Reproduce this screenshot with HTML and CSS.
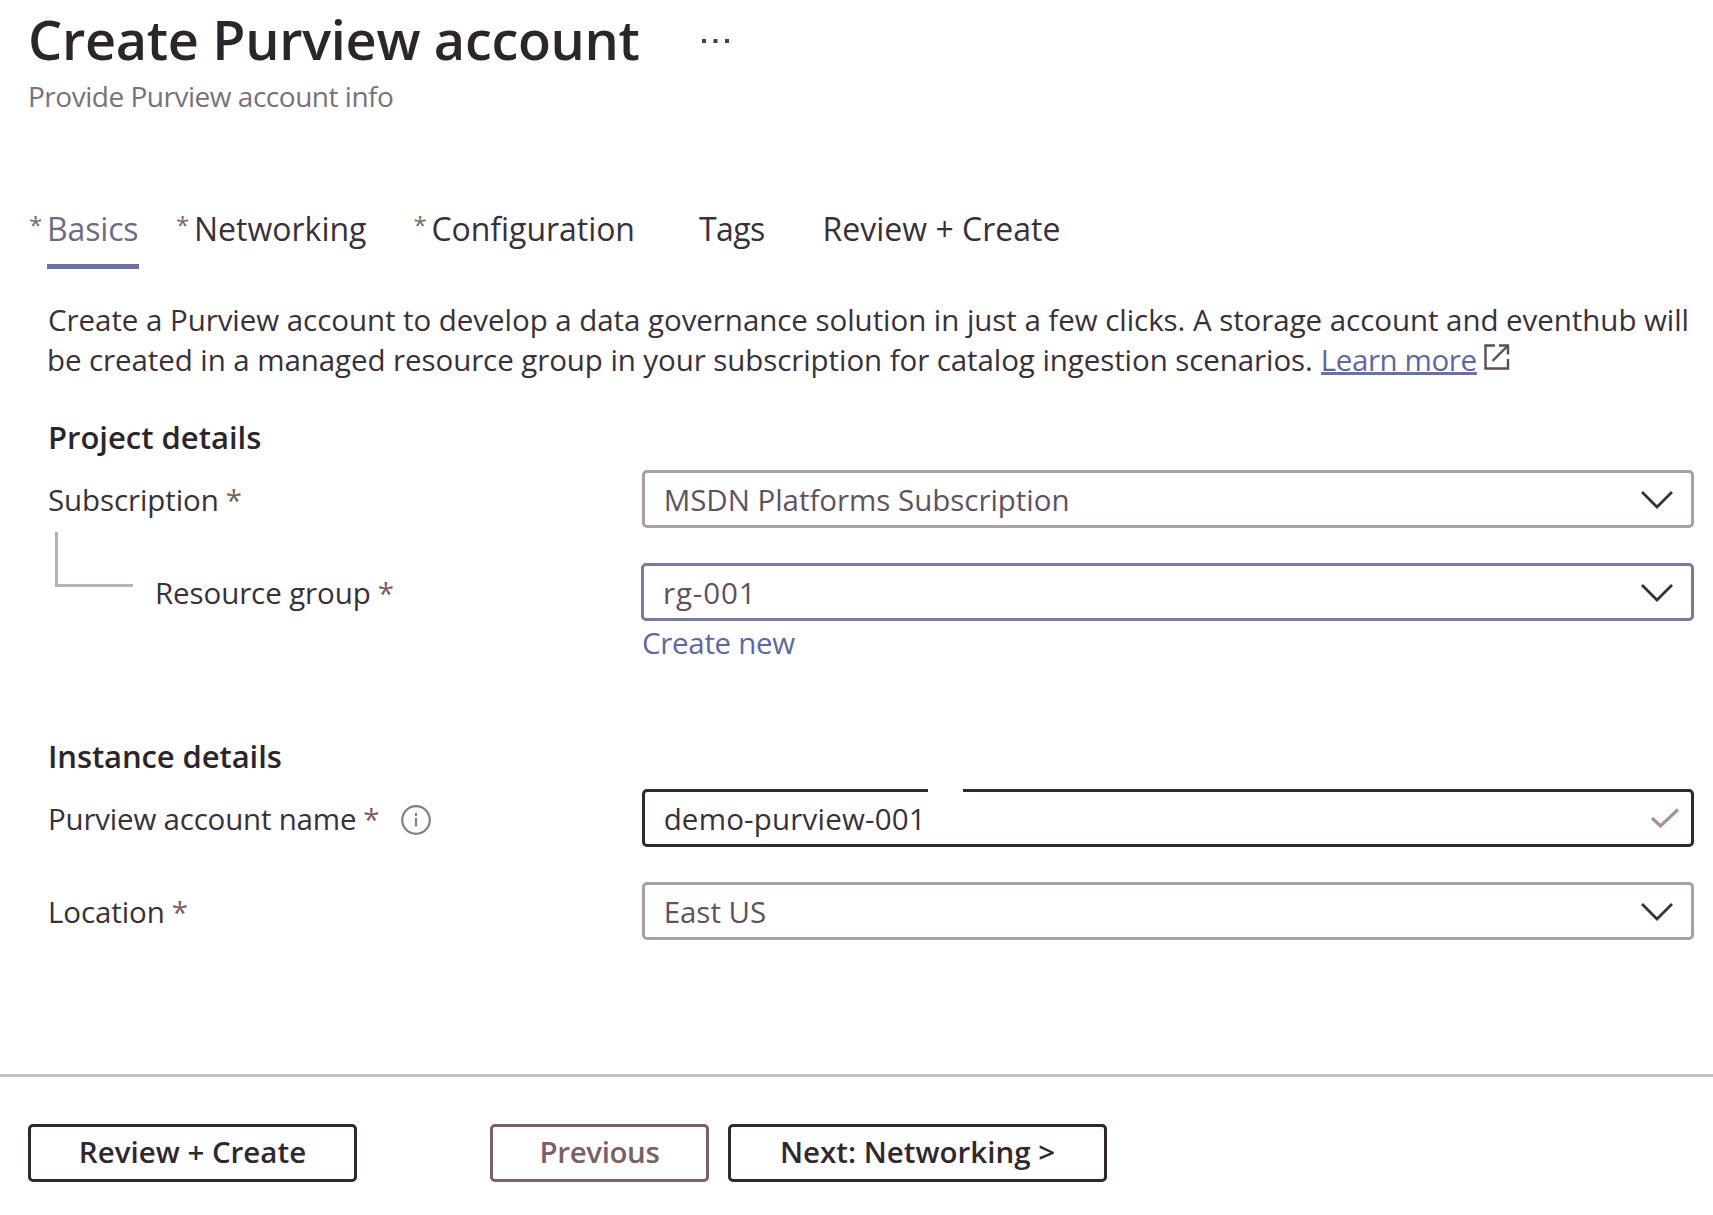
FILE: index.html
```html
<!DOCTYPE html>
<html lang="en">
<head>
<meta charset="utf-8">
<title>Create Purview account</title>
<link rel="stylesheet" href="styles.css">
</head>
<body>
<div class="page">
  <header class="header">
    <div class="title-row">
      <h1 class="title">Create Purview account</h1>
      <svg class="more" width="30" height="6" viewBox="0 0 30 6"><path d="M1 1h4v4H1zM12.500 1h4v4h-4zM24 1h4v4h-4z"/></svg>
    </div>
    <p class="subtitle">Provide Purview account info</p>
  </header>

  <nav class="tabs">
    <div class="tab active"><span class="mark">*</span><a class="tab-name">Basics</a></div>
    <div class="tab networking"><span class="mark">*</span><a class="tab-name">Networking</a></div>
    <div class="tab configuration"><span class="mark">*</span><a class="tab-name">Configuration</a></div>
    <div class="tab tags"><a class="tab-name">Tags</a></div>
    <div class="tab review"><a class="tab-name">Review + Create</a></div>
  </nav>

  <main class="form">
    <p class="intro">
      <span class="line first">Create a Purview account to develop a data governance solution in just a few clicks. A storage account and eventhub will</span>
      <span class="line second"><span>be created in a managed resource group in your subscription for catalog ingestion scenarios.</span><a class="link">Learn more</a><svg class="external" width="26" height="26" viewBox="0 0 26 26"><path d="M11 1.500H1.500v23h22.500V15M15 1.500h9V10.500M23.500 2 8.500 17"/></svg></span>
    </p>

    <h2 class="heading">Project details</h2>
    <div class="row">
      <label class="label subscription">Subscription<span class="star">*</span></label>
      <div class="field"><span class="value">MSDN Platforms Subscription</span><svg class="chevron" width="34" height="20" viewBox="0 0 34 20"><path d="M2 2l15 15L32 2"/></svg></div>
    </div>
    <div class="row group-row">
      <div class="branch"></div>
      <label class="label group">Resource group<span class="star">*</span></label>
      <div class="field blue"><span class="value rg">rg-001</span><svg class="chevron" width="34" height="20" viewBox="0 0 34 20"><path d="M2 2l15 15L32 2"/></svg></div>
    </div>
    <a class="create-new">Create new</a>

    <h2 class="heading instance">Instance details</h2>
    <div class="row">
      <label class="label account">Purview account name<span class="star">*</span><svg class="info" width="32" height="32" viewBox="0 0 32 32"><circle cx="16" cy="16" r="13.800"/><path d="M16 14v8.500M16 9v3"/></svg></label>
      <div class="field dark"><span class="value demo">demo-purview-001</span><span class="gap"></span><svg class="check" width="30" height="20" viewBox="0 0 30 20"><path d="M2 10l8.500 8L28 1.500"/></svg></div>
    </div>
    <div class="row location-row">
      <label class="label">Location<span class="star">*</span></label>
      <div class="field"><span class="value">East US</span><svg class="chevron" width="34" height="20" viewBox="0 0 34 20"><path d="M2 2l15 15L32 2"/></svg></div>
    </div>
  </main>

  <footer class="footer">
    <button class="button create">Review + Create</button>
    <button class="button previous">Previous</button>
    <button class="button next">Next: Networking &gt;</button>
  </footer>
</div>
</body>
</html>
```
FILE: styles.css
```css
* { box-sizing: border-box; }
body {
  margin: 0;
  background: #fff;
  color: #3a3039;
  font-family: "Open Sans", "Noto Sans", sans-serif;
  font-size: 29.5px;
}
h1, h2, p { margin: 0; }
svg { fill: none; flex: none; }
.page {
  width: 1713px;
  height: 1215px;
  display: flex;
  flex-direction: column;
  overflow: hidden;
  white-space: nowrap;
}

.header { height: 207px; padding: 3px 0 0 28px; }
.title-row { display: flex; align-items: center; gap: 61px; }
.title { font-size: 54px; line-height: 72px; font-weight: 600; letter-spacing: -0.3px; color: #2c262c; }
.more { fill: #4a3d46; margin-top: 3px; }
.subtitle { font-size: 28px; line-height: 36px; letter-spacing: -0.48px; color: #79707f; margin-top: 3px; }

.tabs { display: flex; height: 62px; padding-left: 29px; font-size: 32px; line-height: 43px; }
.tab { display: flex; }
.mark { width: 18px; font-size: 24px; line-height: 35px; color: #7d6565; }
.tab-name { height: 62px; }
.active .tab-name { color: #716a84; border-bottom: 5px solid #6b71a3; width: 92px; letter-spacing: -0.15px; }
.networking { margin-left: 37px; }
.configuration { margin-left: 47px; letter-spacing: -0.05px; }
.tags { margin-left: 64px; letter-spacing: -0.6px; }
.review { margin-left: 58px; }

.form { height: 805px; padding: 30px 19px 0 49px; }
.intro { height: 118px; line-height: 41px; }
.line { display: flex; height: 40px; }
.first { letter-spacing: -0.05px; margin-left: -1px; }
.second { letter-spacing: -0.08px; margin-left: -2px; }
.link { margin-left: 8px; height: 36px; border-bottom: 3px solid #6b71a3; color: #6067a0; letter-spacing: -0.4px; }
.external { margin: 5px 0 0 7px; stroke: #5b4c57; stroke-width: 2.4; }

.heading { font-size: 31px; line-height: 40px; font-weight: 600; color: #2c262c; margin-left: -1px; }
.row { display: flex; height: 58px; margin-top: 13px; line-height: 60px; }
.label { display: flex; width: 594px; margin-left: -2px; padding-left: 1px; letter-spacing: -0.1px; }
.star { color: #7a5d5d; margin-left: 7px; }
.account { letter-spacing: -0.2px; }
.info { margin: 15px 0 0 21px; stroke: #877c8b; stroke-width: 2.2; }
.field {
  position: relative;
  display: flex;
  align-items: center;
  width: 1053px;
  margin-left: 1px;
  padding: 0 17px 0 19px;
  border: 3px solid #ac9ea3;
  border-radius: 5px;
  color: #5f525f;
}
.field.blue { border-color: #777aa6; }
.field.dark { border-color: #31272f; color: #3a3039; }
.value { margin-right: auto; line-height: 54px; padding-top: 2px; letter-spacing: -0.03px; }
.rg { letter-spacing: 0.9px; }
.demo { letter-spacing: 0.2px; }
.chevron { stroke: #3a3039; stroke-width: 2.8; margin-top: 2px; }
.check { stroke: #ac9090; stroke-width: 3.2; margin-right: -6px; }
/* break in the top border of the account name field */
.gap { position: absolute; left: 283px; top: -3px; width: 35px; height: 3px; background: #fff; }

.group-row { margin-top: 35px; }
.branch { width: 78px; height: 55px; margin: -31px 0 0 6px; border: solid #b3b3bd; border-width: 0 0 3px 3px; }
.label.group { width: 486px; margin-left: 21px; }
.create-new { display: block; line-height: 42px; height: 40px; margin: 1px 0 0 593px; color: #6067a0; letter-spacing: -0.3px; }
.instance { margin-top: 74px; letter-spacing: -0.1px; }
.location-row { margin-top: 35px; }

.footer { height: 141px; display: flex; padding: 47px 0 0 28px; border-top: 3px solid #bcc4cf; }
.button {
  height: 58px;
  border: 3px solid #31272f;
  border-radius: 5px;
  background: #fff;
  padding: 0 0 4px;
  font: 600 29.5px "Open Sans", "Noto Sans", sans-serif;
  color: #31272f;
}
.create { width: 329px; }
.previous { width: 219px; margin-left: 133px; border-color: #7d6060; color: #7a6064; letter-spacing: -0.4px; }
.next { width: 379px; margin-left: 19px; }
```
